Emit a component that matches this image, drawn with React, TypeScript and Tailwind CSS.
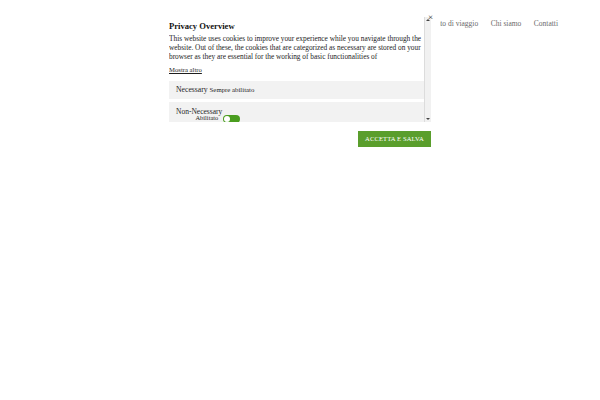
import React from "react";

const serif = "font-['Liberation_Serif','Times_New_Roman',serif]";

const navLinks = ["Racconto di viaggio", "Chi siamo", "Contatti"];

function Toggle() {
  return (
    <span className="flex h-[8px] w-[17px] items-center rounded-full bg-[#4a9d1f] pl-[1px]">
      <span className="h-[6px] w-[6px] rounded-full bg-white" />
    </span>
  );
}

function Scrollbar() {
  return (
    <div className="mt-[5px] flex w-[7px] flex-col items-center justify-between border-l border-[#dcdcdc] bg-[#f1f1f1]">
      <span className="mt-[2px] h-0 w-0 border-x-[2px] border-b-[2px] border-x-transparent border-b-[#444]" />
      <span className="mb-[2px] h-0 w-0 border-x-[2px] border-t-[2px] border-x-transparent border-t-[#444]" />
    </div>
  );
}

export default function App() {
  return (
    <div className={`relative h-[400px] w-[600px] overflow-hidden bg-white ${serif}`}>
      <header className="flex h-[47px] items-center justify-end gap-[12.5px] pr-[42px] text-[7.5px] text-[#6a6a6a]">
        {navLinks.map((link) => (
          <span key={link}>{link}</span>
        ))}
      </header>

      <div className="absolute left-[160px] top-[12px] w-[280px] bg-white pb-[10px] text-[#1e1e1e]">
        <div className="flex pl-[9px]">
          <div className="h-[110px] w-[255px] overflow-hidden">
            <div className="pt-[8px] text-[8.6px] font-bold leading-[12px] text-[#111]">Privacy Overview</div>
            <p className="mt-[2px] text-[7.35px] leading-[9px]">
              This website uses cookies to improve your experience while you navigate through the website. Out of
              these, the cookies that are categorized as necessary are stored on your browser as they are essential
              for the working of basic functionalities of
            </p>
            <div className="mt-[4px] text-[6.7px] leading-[9px] underline">Mostra altro</div>

            <div className="mt-[7px] flex h-[18px] items-center bg-[#f2f2f2] pl-[7px] text-[7.7px]">
              Necessary <span className="ml-[2px] text-[6.8px]">Sempre abilitato</span>
            </div>
            <div className="mt-[3px] flex h-[24px] items-start bg-[#f2f2f2] pl-[7px] pt-[6px]">
              <div className="flex flex-col items-end">
                <span className="text-[7.5px] leading-[7px]">Non-Necessary</span>
                <span className="pr-[4px] text-[6.4px] leading-[6px]">Abilitato</span>
              </div>
              <span className="ml-[1px] mt-[7px]">
                <Toggle />
              </span>
            </div>
          </div>
          <Scrollbar />
        </div>

        <div className="mt-[9px] flex justify-end pr-[9px]">
          <button className="h-[16px] w-[73px] bg-[#5a9e2c] text-[6.6px] tracking-[0.1px] text-white">
            ACCETTA E SALVA
          </button>
        </div>

        <span className="absolute right-[7px] top-[1px] text-[9px] leading-[9px] text-[#222]">×</span>
      </div>
    </div>
  );
}
